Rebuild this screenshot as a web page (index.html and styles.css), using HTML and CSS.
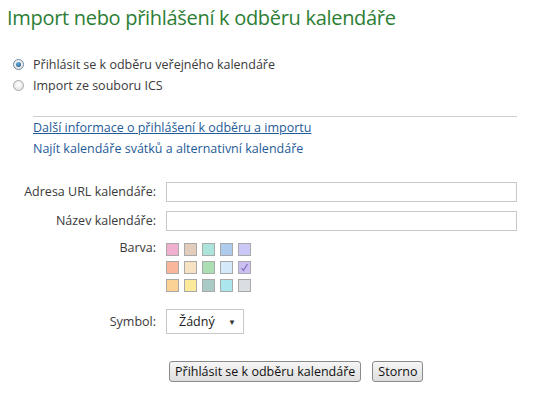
FILE: index.html
```html
<!DOCTYPE html>
<html lang="cs">
<head>
<meta charset="utf-8">
<link rel="stylesheet" href="styles.css">
</head>
<body>
<div class="page">
  <h1 class="title">Import nebo přihlášení k odběru kalendáře</h1>
  <div class="options">
    <label class="opt"><span class="radio checked"></span>Přihlásit se k odběru veřejného kalendáře</label>
    <label class="opt"><span class="radio"></span>Import ze souboru ICS</label>
  </div>
  <div class="links">
    <a class="link underline" href="#">Další informace o přihlášení k odběru a importu</a>
    <a class="link" href="#">Najít kalendáře svátků a alternativní kalendáře</a>
  </div>
  <div class="form">
    <div class="lbl">Adresa URL kalendáře:</div>
    <div class="field"><span class="input"></span></div>
    <div class="lbl">Název kalendáře:</div>
    <div class="field"><span class="input"></span></div>
    <div class="lbl lbl-top">Barva:</div>
    <div class="field">
      <div class="swatches">
        <span class="sw" style="background:#f0b0d0"></span>
        <span class="sw" style="background:#e2cdbc"></span>
        <span class="sw" style="background:#ace4dc"></span>
        <span class="sw" style="background:#aecbee"></span>
        <span class="sw" style="background:#cac8f6"></span>
        <span class="sw" style="background:#fab69a"></span>
        <span class="sw" style="background:#f6e2c2"></span>
        <span class="sw" style="background:#acdeb4"></span>
        <span class="sw" style="background:#d4e9fa"></span>
        <span class="sw sel" style="background:#cdbff2"><svg viewBox="0 0 13 13" width="13" height="13"><path d="M3.5 7 L5.5 9.5 L9.5 3" fill="none" stroke="#7a70b8" stroke-width="1.2"/></svg></span>
        <span class="sw" style="background:#fcd294"></span>
        <span class="sw" style="background:#fcea9a"></span>
        <span class="sw" style="background:#aacac6"></span>
        <span class="sw" style="background:#aae6ec"></span>
        <span class="sw" style="background:#dadee2"></span>
      </div>
    </div>
    <div class="lbl lbl-sym">Symbol:</div>
    <div class="field field-sym">
      <div class="select"><span>Žádný</span><span class="arrow">▼</span></div>
    </div>
  </div>
  <div class="buttons">
    <button class="btn" type="button">Přihlásit se k odběru kalendáře</button>
    <button class="btn" type="button">Storno</button>
  </div>
</div>
</body>
</html>
```
FILE: styles.css
```css
html, body {
  margin: 0;
  padding: 0;
  background: #ffffff;
}
body {
  font-family: "Open Sans", "Noto Sans", sans-serif;
  font-size: 12.5px;
  color: #3a3a3a;
}
.page {
  padding: 4px 0 0 7px;
}
.title {
  margin: 0;
  font-size: 20px;
  font-weight: normal;
  color: #2c7e34;
  line-height: 28px;
  letter-spacing: -0.3px;
}
.options {
  margin-top: 23px;
  display: flex;
  flex-direction: column;
  gap: 3px;
}
.opt {
  display: flex;
  align-items: center;
  height: 18px;
}
.radio {
  width: 11px;
  height: 11px;
  border-radius: 50%;
  border: 1px solid #a8a8a8;
  background: radial-gradient(circle at 50% 40%, #ffffff, #dcdcdc);
  margin: 0 9px 0 6px;
  position: relative;
  box-sizing: border-box;
}
.radio.checked {
  border-color: #6a8aa8;
}
.radio.checked::after {
  content: "";
  position: absolute;
  left: 2px;
  top: 2px;
  width: 5px;
  height: 5px;
  border-radius: 50%;
  background: radial-gradient(circle at 40% 35%, #6ab0e0, #1a4a7a);
}
.links {
  margin: 22px 0 0 26px;
  width: 484px;
  border-top: 1px solid #cfcfcf;
  display: flex;
  flex-direction: column;
}
.link {
  color: #1f5b98;
  text-decoration: none;
  line-height: 21px;
}
.link.underline {
  text-decoration: underline;
}
.form {
  margin-top: 23px;
  display: grid;
  grid-template-columns: 149px 351px;
  column-gap: 10px;
  row-gap: 9px;
}
.lbl {
  text-align: right;
  line-height: 20px;
}
.lbl-top {
  line-height: 16px;
}
.lbl-sym {
  line-height: 25px;
  margin-top: 8px;
}
.input {
  display: block;
  height: 20px;
  box-sizing: border-box;
  border: 1px solid #c8c8c8;
  background: #fff;
}
.swatches {
  display: grid;
  grid-template-columns: repeat(5, 13px);
  grid-auto-rows: 13px;
  gap: 5px;
  margin-top: 3px;
}
.sw {
  box-sizing: border-box;
  border: 1px solid #a9a9a9;
  display: block;
}
.sw svg {
  display: block;
  margin: -1px;
}
.field-sym {
  margin-top: 8px;
}
.select {
  width: 78px;
  height: 25px;
  box-sizing: border-box;
  border: 1px solid #c8c8c8;
  display: flex;
  align-items: center;
  justify-content: space-between;
  padding: 0 7px 0 12px;
  font-size: 12.5px;
  color: #222;
}
.arrow {
  font-size: 8px;
  color: #333;
}
.buttons {
  margin-top: 27px;
  display: flex;
  gap: 11px;
  padding-left: 162px;
}
.btn {
  font-family: "Open Sans", "Noto Sans", sans-serif;
  font-size: 12.5px;
  color: #111;
  height: 21px;
  padding: 0 5px;
  border: 1px solid #8a8a8a;
  border-radius: 3px;
  background: linear-gradient(#f6f6f6, #dedede);
  line-height: 19px;
}
```
